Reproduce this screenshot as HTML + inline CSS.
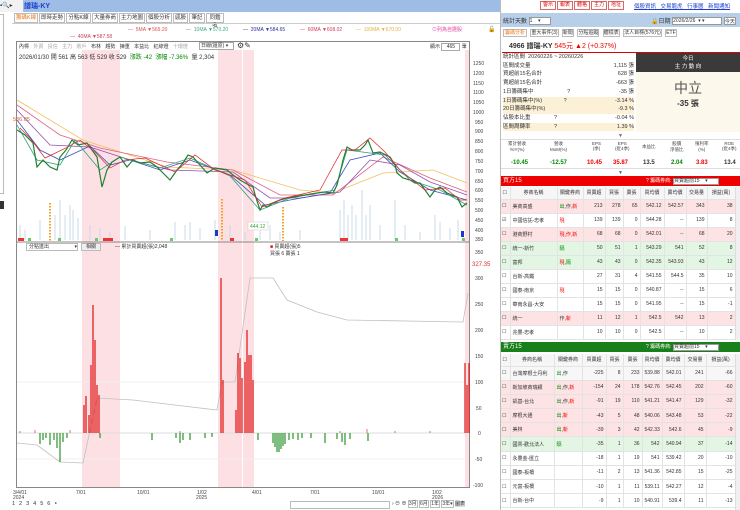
<!DOCTYPE html><html><head><meta charset="utf-8"><style>
*{margin:0;padding:0;box-sizing:border-box}
body{width:740px;height:510px;overflow:hidden;background:#fff;font-family:"Liberation Sans","Noto Sans CJK TC",sans-serif;font-size:6px;color:#333;position:relative}
.a{position:absolute;white-space:nowrap}
.tab{position:absolute;top:13px;height:10px;border:1px solid #bbb;background:#fff;font-size:5.5px;line-height:8px;text-align:center}
table{border-collapse:collapse;position:absolute;font-size:5px;table-layout:fixed}
td{border-right:1px solid #e3e3e3;border-bottom:1px solid #e3e3e3;padding:0 2px;white-space:nowrap;overflow:hidden}
.r{text-align:right}.c{text-align:center}
.pk td{background:#fde3e3}.gn td{background:#e3f5e3}
.red{color:#e00}.grn{color:#080}
.btn{position:absolute;top:1px;height:9px;border:1px solid #d66;background:#fff;color:#d00;font-size:5px;line-height:7px;padding:0 2px}
</style></head><body>
<!-- title bar -->
<div class="a" style="left:0;top:0;width:500px;height:12px;background:#9dbde6"></div>
<div class="a" style="left:0;top:0;width:23px;height:12px;background:#f2f2f2;font-size:6px;line-height:12px">▪🔍▸</div>
<div class="a" style="left:24px;top:1px;font-size:7px;color:#1a3fd0;font-weight:bold">譜瑞-KY</div>
<!-- left sidebar -->
<div class="a" style="left:0;top:14px;width:4px;height:180px;border:1px solid #bbb;border-left:none"></div>
<div class="a" style="left:0;top:201px;width:4px;height:8px;background:#333"></div>
<!-- tabs -->
<div class="tab" style="left:14px;width:24px;color:#e87a1a">籌碼K線</div>
<div class="tab" style="left:39px;width:26px">即時走勢</div>
<div class="tab" style="left:66px;width:25px">分點K線</div>
<div class="tab" style="left:92px;width:26px">大量券商</div>
<div class="tab" style="left:119px;width:26px">主力地圖</div>
<div class="tab" style="left:146px;width:26px">個股分析</div>
<div class="tab" style="left:173px;width:15px">感股</div>
<div class="tab" style="left:189px;width:16px">筆記</div>
<div class="tab" style="left:206px;width:18px">同鑑收</div>
<div class="a" style="left:12px;top:23px;width:488px;height:1px;background:#ccc"></div>
<!-- MA legend -->
<div class="a" style="top:27px;left:128px;font-size:5px;color:#e05050">— &nbsp;5MA ▼569.20</div>
<div class="a" style="top:27px;left:186px;font-size:5px;color:#3aaa8a">— &nbsp;10MA ▼570.20</div>
<div class="a" style="top:27px;left:243px;font-size:5px;color:#3030a0">— &nbsp;20MA ▼584.65</div>
<div class="a" style="top:27px;left:300px;font-size:5px;color:#d04060">— &nbsp;60MA ▼608.02</div>
<div class="a" style="top:27px;left:356px;font-size:5px;color:#e8b040">— &nbsp;100MA ▼670.00</div>
<div class="a" style="top:26px;left:432px;font-size:5px;color:#e040a0">⊙列為自選股</div>
<div class="a" style="top:26px;left:488px;font-size:6px">🔓</div>
<div class="a" style="top:34px;left:70px;font-size:5px;color:#d04060">— &nbsp;40MA ▼587.58</div>
<!-- chart -->
<svg class="a" style="left:0;top:0" width="500" height="510">
<rect x="16.5" y="41.5" width="453" height="446" fill="#fff" stroke="#888"/>
<g fill="#fde0e3">
<rect x="82" y="50" width="38" height="437"/><rect x="218" y="50" width="24" height="437"/><rect x="243" y="50" width="11" height="437"/><rect x="465" y="50" width="4" height="437"/></g>
<line x1="17" y1="242" x2="469" y2="242" stroke="#888"/>
<g stroke="#f0f0f0"><line x1="17" y1="382" x2="465" y2="382"/><line x1="17" y1="459" x2="465" y2="459"/></g>
<!-- volume -->
<g stroke="#c8d8ea" stroke-width="1">
<path d="M20 240V225M25 240V230M40 240V220M55 240V215M60 240V200M65 240V215M70 240V205M73 240V210M78 240V218M90 240V225M100 240V228M110 240V232M125 240V226M150 240V230M175 240V222M185 240V225M190 240V222M200 240V228M215 240V220M230 240V225M245 240V232M260 240V230M270 240V225M280 240V232M300 240V230M340 240V210M344 240V200M348 240V215M352 240V205M356 240V215M362 240V190M366 240V215M370 240V205M380 240V225M395 240V200M405 240V225M420 240V232M435 240V215M440 240V222M450 240V228M458 240V220"/></g>
<g stroke="#f5a020" stroke-width="2" stroke-dasharray="1.5 1.5"><line x1="50" y1="203" x2="50" y2="241"/><line x1="222" y1="199" x2="222" y2="241"/><line x1="283" y1="207" x2="283" y2="241"/></g>
<g fill="#1a3acb"><rect x="215" y="230" width="3" height="6"/><rect x="461" y="231" width="3" height="6"/></g>
<g fill="#e33"><rect x="18" y="238" width="6" height="3"/><rect x="103" y="238" width="10" height="3"/><rect x="230" y="238" width="4" height="3"/><rect x="340" y="238" width="8" height="3"/></g>
<g fill="#6c6"><rect x="28" y="238" width="3" height="3"/><rect x="58" y="238" width="3" height="3"/><rect x="95" y="238" width="3" height="3"/><rect x="170" y="238" width="3" height="3"/><rect x="255" y="238" width="3" height="3"/><rect x="395" y="238" width="3" height="3"/><rect x="462" y="238" width="3" height="3"/></g>
<!-- MAs -->
<polyline fill="none" stroke="#f0c060" stroke-width="0.8" points="17,100 83,140 167,167 233,170 300,190 333,193 383,173 433,170 467,183"/>
<polyline fill="none" stroke="#e06080" stroke-width="0.8" points="17,105 60,135 100,148 167,162 233,170 280,195 333,195 383,157 430,178 467,192"/>
<polyline fill="none" stroke="#9050b0" stroke-width="0.8" points="17,110 50,145 90,147 130,160 170,170 233,172 270,198 300,198 340,192 370,160 400,165 430,182 467,195"/>
<polyline fill="none" stroke="#4050c0" stroke-width="0.8" points="17,120 40,150 60,160 90,146 110,165 130,160 160,170 190,160 230,175 265,205 290,200 330,193 350,160 380,153 400,172 430,190 467,200"/>
<polyline fill="none" stroke="#30a080" stroke-width="0.8" points="17,125 37,160 60,165 75,140 100,170 120,157 160,168 190,158 230,176 260,210 290,198 335,190 347,150 385,155 410,180 440,190 467,205"/>
<polyline fill="none" stroke="#208030" stroke-width="1.2" points="17,130 25,135 33,143 37,167 43,160 50,167 57,170 60,157 66,150 72,140 78,145 87,143 92,150 97,157 100,175 102,187 107,170 112,162 120,157 127,167 133,160 140,163 150,162 157,167 165,175 170,180 177,170 183,163 188,155 193,157 200,165 207,173 215,168 227,170 233,175 240,180 247,184 253,187 256,198 260,210 263,205 267,207 273,203 280,200 287,198 293,197 305,195 317,193 325,192 333,193 337,185 340,173 343,160 347,147 352,150 360,150 365,145 368,140 373,153 380,152 390,157 395,165 397,173 403,178 410,180 415,183 420,183 425,190 430,197 435,190 440,187 447,193 452,195 457,197 460,203 462,207 467,203"/>
<polyline fill="none" stroke="#e02020" stroke-width="0.7" points="20,128 30,138 45,158 66,148 80,140 95,152 110,168 125,160 145,158 175,172 195,155 215,170 245,180 262,207 285,198 320,190 342,150 355,150 370,138 385,152 400,170 425,190 445,188 460,200 467,200"/>
<text x="13" y="121" font-size="5.5" fill="#e05a30">536.05</text>
<rect x="248" y="222" width="20" height="8" fill="#fff" stroke="#ccc" stroke-width="0.5"/><text x="250" y="228" font-size="5" fill="#3a3">444.12</text>
<!-- lower panel -->
<line x1="17" y1="433" x2="465" y2="433" stroke="#ddd"/>
<polyline fill="none" stroke="#c0c0c0" stroke-width="0.8" points="17,443 37,445 60,462 83,463 97,398 133,400 217,410 222,382 235,382 250,278 273,278 287,300 317,312 347,320 463,322 468,293"/>
<g stroke="#e01010" stroke-width="1.2">
<path d="M84 433V405M86 433V396M89 433V415M91 433V365M93 433V305M95 433V340M97 433V385M99 433V395M221 433V278M223 433V380M236 433V410M238 433V353M240 433V358M242 433V378M245 433V362M247 433V330M249 433V355M251 433V355M253 433V380M465 433V363M467 433V385M469 433V363"/></g>
<g stroke="#e01010" stroke-width="0.6"><path d="M20 433V431M35 433V430M70 433V430M180 433V431M340 433V431M367 433V429M395 433V431M430 433V431"/></g>
<g stroke="#1a8a1a" stroke-width="1.1">
<path d="M40 433V444M43 433V440M46 433V438M50 433V445M54 433V440M57 433V448M60 433V462M63 433V442M67 433V438M100 433V438M152 433V440M176 433V438M180 433V443M183 433V440M190 433V440M205 433V438M212 433V437M258 433V440M273 433V443M275 433V447M277 433V452M279 433V452M281 433V449M283 433V446M285 433V444M289 433V440M293 433V439M298 433V440M302 433V438M311 433V438M325 433V443M337 433V439M342 433V442M345 433V445M350 433V439M368 433V441"/></g>
<!-- axes labels -->
<g font-size="5" fill="#444">
<text x="473" y="65">1250</text><text x="473" y="75">1200</text><text x="473" y="85">1150</text><text x="473" y="94">1100</text><text x="473" y="104">1050</text><text x="473" y="114">1000</text><text x="475" y="124">950</text><text x="475" y="133">900</text><text x="475" y="143">850</text><text x="475" y="153">800</text><text x="475" y="163">750</text><text x="475" y="173">700</text><text x="475" y="183">650</text><text x="475" y="192">600</text><text x="475" y="202">550</text><text x="475" y="212">500</text><text x="475" y="222">450</text><text x="475" y="232">400</text><text x="475" y="241">350</text>
<text x="475" y="254">350</text><text x="475" y="280">300</text><text x="475" y="306">250</text><text x="475" y="332">200</text><text x="475" y="358">150</text><text x="475" y="384">100</text><text x="476" y="410">50</text><text x="478" y="435">0</text><text x="475" y="461">-50</text><text x="473" y="487">-100</text>
<text x="13" y="494">3/4/01</text><text x="13" y="499">2024</text><text x="76" y="494">7/01</text><text x="137" y="494">10/01</text><text x="197" y="494">1/02</text><text x="196" y="499">2025</text><text x="252" y="494">4/01</text><text x="310" y="494">7/01</text><text x="372" y="494">10/01</text><text x="432" y="494">1/02</text><text x="432" y="499">2026</text>
</g>
<text x="472" y="266" font-size="6" fill="#e03030">327.35</text>
</svg>
<!-- chart toolbar -->
<div class="a" style="left:19px;top:43px;font-size:5px;color:#333;word-spacing:3px">內標 <span style="color:#aaa">外資 投信 主力 散戶</span> 布林 趨勢 揀重 本益比 紅綠燈 <span style="color:#aaa">十環燈</span></div>
<div class="a" style="left:199px;top:42px;width:35px;height:8px;border:1px solid #aaa;font-size:5px;line-height:6px;padding-left:1px">日線(還原) ▾</div>
<div class="a" style="left:237px;top:41px;font-size:8px;line-height:9px">⚙✎</div>
<div class="a" style="left:430px;top:43px;font-size:5px">顯示 <span style="display:inline-block;width:19px;height:8px;border:1px solid #aaa;text-align:center">465</span> 筆</div>
<div class="a" style="left:19px;top:52px;font-size:6px">2026/01/30 開 561 高 563 低 529 收 529 &nbsp;<span class="grn">漲跌 -42 &nbsp;漲幅 -7.36%</span> &nbsp;量 2,304</div>
<div class="a" style="left:26px;top:243px;width:52px;height:8px;border:1px solid #bbb;font-size:5px;line-height:6px;padding-left:2px;background:#fff">分點進出 <span style="float:right">▾</span></div>
<div class="a" style="left:81px;top:243px;width:20px;height:8px;border:1px solid #bbb;background:#eee;font-size:5px;line-height:6px;text-align:center">相關</div>
<div class="a" style="left:115px;top:243px;font-size:5px">— 累計買賣超(張)2,048</div>
<div class="a" style="left:270px;top:243px;font-size:5px"><span class="red">■</span> 買賣超(張)5<br>買張 6 賣張 1</div>
<!-- bottom bar -->
<div class="a" style="left:12px;top:501px;font-size:5.5px;letter-spacing:4px">123456‣</div>
<div class="a" style="left:290px;top:501px;width:100px;height:8px;border:1px solid #bbb"></div>
<div class="a" style="left:392px;top:500px;font-size:5px">› ⊖ ⊕ <span style="border:1px solid #bbb">3月</span> <span style="border:1px solid #bbb">6月</span> <span style="border:1px solid #bbb">1年</span> <span style="border:1px solid #bbb">3年▾</span> <span style="background:#ddd">圖表</span></div>

<!-- RIGHT PANEL -->
<div class="a" style="left:500px;top:0;width:240px;height:12px;background:#fff;border-left:1px solid #ccc"></div>
<div class="btn" style="left:540px">警示</div><div class="btn" style="left:557px">報表</div><div class="btn" style="left:574px">體格</div><div class="btn" style="left:591px">主力</div><div class="btn" style="left:608px">地址</div>
<div class="a" style="left:634px;top:2px;font-size:5.5px;color:#1a3fd0;text-decoration:underline;word-spacing:3px">個股資訊 交易龍虎 行事曆 新聞通知</div>
<div class="a" style="left:500px;top:13px;width:240px;height:14px;background:#b7cfe9"></div>
<div class="a" style="left:503px;top:16px;font-size:6px">統計天數 <span style="display:inline-block;width:22px;height:8px;background:#fff;border:1px solid #999;font-size:5px;vertical-align:middle">1 &nbsp;&nbsp;&nbsp;▾</span></div>
<div class="a" style="left:651px;top:16px;font-size:6px">🔒日期 <span style="display:inline-block;width:50px;height:8px;background:#fff;border:1px solid #999;font-size:5px;vertical-align:middle">2026/2/26 &nbsp;▾ ▾</span> <span style="display:inline-block;width:12px;height:8px;background:#fff;border:1px solid #999;font-size:5px;vertical-align:middle">今天</span></div>
<div class="a" style="left:503px;top:29px;font-size:5px;word-spacing:2px"><span style="border:1px solid #bbb;color:#e87a1a;padding:0 1px">籌碼分析</span> <span style="border:1px solid #bbb">重大事件(3)</span> <span style="border:1px solid #bbb">新聞</span> <span style="border:1px solid #bbb">分點追蹤</span> <span style="border:1px solid #bbb">體檢表</span> <span style="border:1px solid #bbb">法人目標(576元)</span> <span style="border:1px solid #bbb">ETF</span></div>
<div class="a" style="left:509px;top:41px;font-size:7px;font-weight:bold">4966 譜瑞-KY <span class="red" style="font-weight:normal">545元 ▲2 (+0.37%)</span></div>
<div class="a" style="left:502px;top:52px;width:238px;height:1px;background:#d00"></div>
<div class="a" style="left:503px;top:53px;width:131px;height:79px;font-size:5.5px;line-height:8.7px">
<div>統計區間 &nbsp;20260226 ~ 20260226</div>
<div>區間成交量<span style="float:right">1,115 張</span></div>
<div>買超前15名合計<span style="float:right">628 張</span></div>
<div>賣超前15名合計<span style="float:right">-663 張</span></div>
<div>1日籌碼集中 <span style="margin-left:32px">?</span><span style="float:right">-35 張</span></div>
<div style="background:#fcf0d6">1日籌碼集中(%) <span style="margin-left:20px">?</span><span style="float:right">-3.14 %</span></div>
<div style="background:#fcf0d6">20日籌碼集中(%)<span style="float:right">-9.3 %</span></div>
<div>佔股本比重 <span style="margin-left:22px">?</span><span style="float:right">-0.04 %</span></div>
<div style="background:#fcf0d6">區間周轉率 <span style="margin-left:22px">?</span><span style="float:right">1.39 %</span></div>
</div>
<div class="a" style="left:636px;top:53px;width:104px;height:19px;background:#3a3a3a;color:#fff;text-align:center;font-size:5.5px;line-height:8px;padding-top:2px">今日<br>主 力 動 向</div>
<div class="a" style="left:636px;top:72px;width:104px;height:60px;background:#fdf8ec;text-align:center"><div style="font-size:14px;color:#555;margin-top:6px">中立</div><div style="font-size:8px;font-weight:bold;color:#333">-35 張</div></div>
<div class="a" style="left:618px;top:133px;font-size:5px;color:#666">▼</div>
<div class="a" style="left:500px;top:139px;width:240px;height:30px;border-top:1px solid #ddd;border-bottom:1px solid #ddd"></div>
<div class="a" style="left:500px;top:141px;width:240px;font-size:4.5px;color:#444;text-align:center">
<span class="a" style="left:8px;top:0">累計營收<br>YoY(%)</span><span class="a" style="left:50px">營收<br>MoM(%)</span><span class="a" style="left:92px">EPS<br>(季)</span><span class="a" style="left:115px">EPS<br>(近4季)</span><span class="a" style="left:142px;top:3px">本益比</span><span class="a" style="left:170px">股價<br>淨值比</span><span class="a" style="left:195px">殖利率<br>(%)</span><span class="a" style="left:222px">ROE<br>(近4季)</span></div>
<div class="a" style="left:500px;top:160px;width:240px;font-size:6px;font-weight:bold">
<span class="a grn" style="left:11px">-10.45</span><span class="a grn" style="left:50px">-12.57</span><span class="a red" style="left:87px">10.45</span><span class="a red" style="left:113px">35.87</span><span class="a" style="left:143px">13.5</span><span class="a grn" style="left:171px">2.04</span><span class="a red" style="left:196px">3.83</span><span class="a" style="left:224px">13.4</span></div>
<div class="a" style="left:618px;top:170px;font-size:5px;color:#666">▼</div>
<!-- buy header -->
<div class="a" style="left:500px;top:176px;width:240px;height:10px;background:#e00;color:#fff;font-size:6px;line-height:10px;padding-left:3px">買方15<span style="position:absolute;left:146px;font-size:5px">? 籌碼券商: <span style="display:inline-block;width:46px;height:7px;background:#fff;color:#333;border:1px solid #999;line-height:5px">買賣超前15 &nbsp;&nbsp;&nbsp;▾</span></span></div>
<table style="left:500px;top:187px;width:235px">
<colgroup><col style="width:10px"><col style="width:47px"><col style="width:26px"><col style="width:22px"><col style="width:18px"><col style="width:17px"><col style="width:24px"><col style="width:22px"><col style="width:21px"><col style="width:28px"></colgroup>
<tr style="height:12px;background:#f6f6f6" class="c"><td>☐</td><td>券商名稱</td><td>關鍵券商</td><td>買賣超</td><td>買張</td><td>賣張</td><td>買均價</td><td>賣均價</td><td>交易量</td><td>損益(萬)</td></tr>
<tr class="pk" style="height:14px"><td>☐</td><td>美商高盛</td><td><span class="grn">出</span>,作,<span class="red">新</span></td><td class="r">213</td><td class="r">278</td><td class="r">65</td><td class="r">542.12</td><td class="r">542.57</td><td class="r">343</td><td class="r">38</td></tr>
<tr style="height:14px"><td>☑</td><td>中國信託-忠孝</td><td class="red">現</td><td class="r">139</td><td class="r">139</td><td class="r">0</td><td class="r">544.28</td><td class="r">--</td><td class="r">139</td><td class="r">8</td></tr>
<tr class="pk" style="height:14px"><td>☐</td><td>港商野村</td><td class="red">現,作,新</td><td class="r">68</td><td class="r">68</td><td class="r">0</td><td class="r">542.01</td><td class="r">--</td><td class="r">68</td><td class="r">20</td></tr>
<tr class="gn" style="height:14px"><td>☐</td><td>統一-新竹</td><td class="grn">隔</td><td class="r">50</td><td class="r">51</td><td class="r">1</td><td class="r">543.29</td><td class="r">541</td><td class="r">52</td><td class="r">8</td></tr>
<tr class="gn" style="height:14px"><td>☐</td><td>富邦</td><td><span class="red">現</span>,<span class="grn">隔</span></td><td class="r">43</td><td class="r">43</td><td class="r">0</td><td class="r">542.35</td><td class="r">543.93</td><td class="r">43</td><td class="r">12</td></tr>
<tr style="height:14px"><td>☐</td><td>台新-高鐵</td><td></td><td class="r">27</td><td class="r">31</td><td class="r">4</td><td class="r">541.55</td><td class="r">544.5</td><td class="r">35</td><td class="r">10</td></tr>
<tr style="height:14px"><td>☐</td><td>國泰-南京</td><td class="red">現</td><td class="r">15</td><td class="r">15</td><td class="r">0</td><td class="r">540.87</td><td class="r">--</td><td class="r">15</td><td class="r">6</td></tr>
<tr style="height:14px"><td>☐</td><td>華南永昌-大安</td><td></td><td class="r">15</td><td class="r">15</td><td class="r">0</td><td class="r">541.95</td><td class="r">--</td><td class="r">15</td><td class="r">-1</td></tr>
<tr class="pk" style="height:14px"><td>☐</td><td>統一</td><td>作,<span class="red">新</span></td><td class="r">11</td><td class="r">12</td><td class="r">1</td><td class="r">542.5</td><td class="r">542</td><td class="r">13</td><td class="r">2</td></tr>
<tr style="height:14px"><td>☐</td><td>兆豐-忠孝</td><td></td><td class="r">10</td><td class="r">10</td><td class="r">0</td><td class="r">542.5</td><td class="r">--</td><td class="r">10</td><td class="r">2</td></tr>
</table>
<div class="a" style="left:735px;top:187px;width:5px;height:153px;background:#f0f0f0;border-left:1px solid #ddd"></div>
<!-- sell header -->
<div class="a" style="left:500px;top:342px;width:240px;height:10px;background:#17801a;color:#fff;font-size:6px;line-height:10px;padding-left:3px">賣方15<span style="position:absolute;left:146px;font-size:5px">? 籌碼券商: <span style="display:inline-block;width:46px;height:7px;background:#fff;color:#333;border:1px solid #999;line-height:5px">買賣超前15 &nbsp;&nbsp;&nbsp;▾</span></span></div>
<table style="left:500px;top:354px;width:235px">
<colgroup><col style="width:10px"><col style="width:44px"><col style="width:28px"><col style="width:24px"><col style="width:17px"><col style="width:19px"><col style="width:20px"><col style="width:22px"><col style="width:22px"><col style="width:29px"></colgroup>
<tr style="height:12px;background:#f6f6f6" class="c"><td>☐</td><td>券商名稱</td><td>關鍵券商</td><td>買賣超</td><td>買張</td><td>賣張</td><td>買均價</td><td>賣均價</td><td>交易量</td><td>損益(萬)</td></tr>
<tr style="height:14.2px;background:#f7f7f7"><td>☐</td><td>台灣摩根士丹利</td><td><span class="grn">出</span>,作</td><td class="r">-225</td><td class="r">8</td><td class="r">233</td><td class="r">539.88</td><td class="r">542.01</td><td class="r">241</td><td class="r">-66</td></tr>
<tr class="pk" style="height:14.2px"><td>☐</td><td>新加坡商瑞銀</td><td><span class="grn">出</span>,作,<span class="red">新</span></td><td class="r">-154</td><td class="r">24</td><td class="r">178</td><td class="r">542.76</td><td class="r">542.45</td><td class="r">202</td><td class="r">-60</td></tr>
<tr class="pk" style="height:14.2px"><td>☐</td><td>凱基-台北</td><td><span class="grn">出</span>,作,<span class="red">新</span></td><td class="r">-91</td><td class="r">19</td><td class="r">110</td><td class="r">541.21</td><td class="r">541.47</td><td class="r">129</td><td class="r">-32</td></tr>
<tr class="pk" style="height:14.2px"><td>☐</td><td>摩根大通</td><td><span class="grn">出</span>,<span class="red">新</span></td><td class="r">-43</td><td class="r">5</td><td class="r">48</td><td class="r">540.06</td><td class="r">543.48</td><td class="r">53</td><td class="r">-22</td></tr>
<tr class="pk" style="height:14.2px"><td>☐</td><td>美林</td><td><span class="grn">出</span>,<span class="red">新</span></td><td class="r">-39</td><td class="r">3</td><td class="r">42</td><td class="r">542.33</td><td class="r">542.6</td><td class="r">45</td><td class="r">-9</td></tr>
<tr class="gn" style="height:14.2px"><td>☐</td><td>國票-歡北法人</td><td class="grn">隔</td><td class="r">-35</td><td class="r">1</td><td class="r">36</td><td class="r">542</td><td class="r">540.94</td><td class="r">37</td><td class="r">-14</td></tr>
<tr style="height:14.2px"><td>☐</td><td>永豐金-匯立</td><td></td><td class="r">-18</td><td class="r">1</td><td class="r">19</td><td class="r">541</td><td class="r">539.42</td><td class="r">20</td><td class="r">-10</td></tr>
<tr style="height:14.2px"><td>☐</td><td>國泰-板橋</td><td></td><td class="r">-11</td><td class="r">2</td><td class="r">13</td><td class="r">541.36</td><td class="r">542.85</td><td class="r">15</td><td class="r">-25</td></tr>
<tr style="height:14.2px"><td>☐</td><td>元富-板橋</td><td></td><td class="r">-10</td><td class="r">1</td><td class="r">11</td><td class="r">539.11</td><td class="r">542.27</td><td class="r">12</td><td class="r">-4</td></tr>
<tr style="height:14.2px"><td>☐</td><td>台新-台中</td><td></td><td class="r">-9</td><td class="r">1</td><td class="r">10</td><td class="r">540.91</td><td class="r">539.4</td><td class="r">11</td><td class="r">-13</td></tr>
</table>
<div class="a" style="left:735px;top:354px;width:5px;height:156px;background:#f0f0f0;border-left:1px solid #ddd"></div>
<div class="a" style="left:500px;top:0;width:1px;height:510px;background:#bbb"></div>
</body></html>
